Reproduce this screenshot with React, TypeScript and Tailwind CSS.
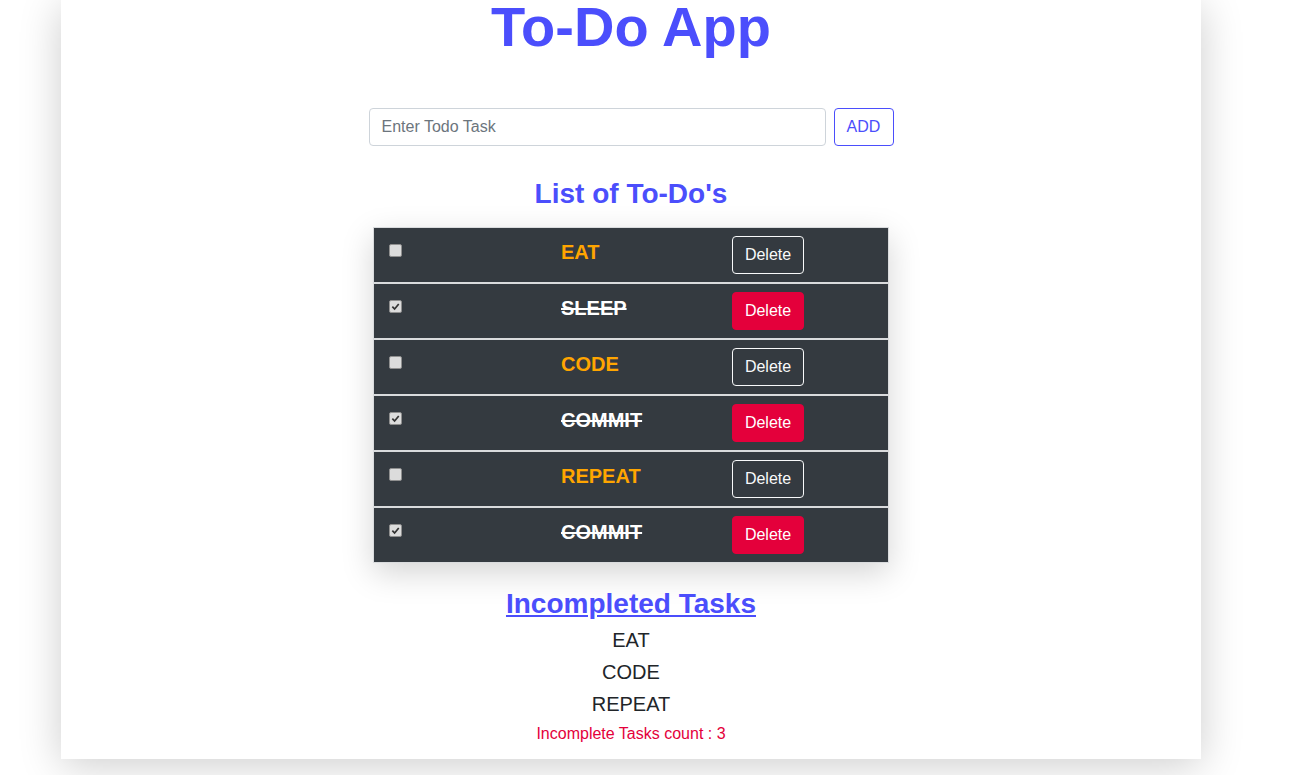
import React from 'react';

interface Todo {
  id: number;
  text: string;
  done: boolean;
}

const todos: Todo[] = [
  { id: 1, text: 'EAT', done: false },
  { id: 2, text: 'SLEEP', done: true },
  { id: 3, text: 'CODE', done: false },
  { id: 4, text: 'COMMIT', done: true },
  { id: 5, text: 'REPEAT', done: false },
  { id: 6, text: 'COMMIT', done: true },
];

const Check: React.FC<{ checked: boolean }> = ({ checked }) => (
  <span className="flex h-[13px] w-[13px] items-center justify-center rounded-[2px] border border-[#8f8f8f] bg-[#dcdcdc]">
    {checked && (
      <svg width="9" height="9" viewBox="0 0 10 10">
        <path d="M1.5 5.2 L4 7.8 L8.6 2.2" fill="none" stroke="#333" strokeWidth="1.9" />
      </svg>
    )}
  </span>
);

const App: React.FC = () => {
  const incomplete = todos.filter((t) => !t.done);

  return (
    <div className="min-h-[775px] bg-white font-['Liberation_Sans',Arial,sans-serif]">
      <div className="ml-[61px] flex w-[1140px] flex-col items-center bg-white pb-[13px] shadow-[0_6px_40px_rgba(0,0,0,0.2)]">
        <h1 className="-mt-[7px] text-[56px] font-bold leading-[1.2] text-[#4b4efc]">To-Do App</h1>

        <div className="mt-[48px] flex gap-2">
          <input
            type="text"
            placeholder="Enter Todo Task"
            className="h-[38px] w-[457px] rounded-[4px] border border-[#ced4da] px-3 text-base text-[#495057] outline-none placeholder:text-[#6c757d]"
          />
          <button className="h-[38px] w-[60px] rounded-[4px] border border-[#4b4efc] text-base text-[#4b4efc]">
            ADD
          </button>
        </div>

        <h3 className="mt-[31px] text-[28px] font-bold leading-[34px] text-[#4b4efc]">List of To-Do's</h3>

        <div className="mt-4 flex w-[516px] flex-col gap-[2px] bg-[#d9dbdd] p-px shadow-[0_10px_30px_rgba(0,0,0,0.17)]">
          {todos.map((t) => (
            <div key={t.id} className="flex h-[54px] bg-[#343a40]">
              <div className="w-[187px] pl-[15px] pt-[16px]">
                <Check checked={t.done} />
              </div>
              <div className="w-[171px] pt-[12px]">
                <span
                  className={
                    t.done
                      ? 'text-[20px] font-bold leading-6 text-white line-through'
                      : 'text-[20px] font-bold leading-6 text-[#ffa500]'
                  }
                >
                  {t.text}
                </span>
              </div>
              <div className="pt-2">
                <button
                  className={
                    t.done
                      ? 'h-[38px] w-[72px] rounded-[4px] border border-[#e4003b] bg-[#e4003b] text-base text-white'
                      : 'h-[38px] w-[72px] rounded-[4px] border border-[#f8f9fa] text-base text-[#f8f9fa]'
                  }
                >
                  Delete
                </button>
              </div>
            </div>
          ))}
        </div>

        <h3 className="mt-6 text-[28px] font-bold leading-[34px] text-[#4b4efc] underline">Incompleted Tasks</h3>
        <div className="mt-[3px] flex flex-col items-center">
          {incomplete.map((t) => (
            <p key={t.id} className="text-[20px] leading-8 text-[#212529]">
              {t.text}
            </p>
          ))}
        </div>
        <p className="mt-[2px] text-base leading-6 text-[#e4003b]">Incomplete Tasks count : {incomplete.length}</p>
      </div>
    </div>
  );
};

export default App;
